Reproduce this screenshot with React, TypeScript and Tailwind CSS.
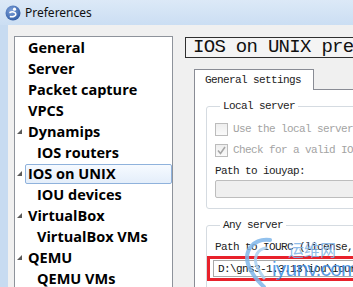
import React from 'react';

type Item = { label: string; level: 0 | 1; arrow?: boolean; selected?: boolean };

const items: Item[] = [
  { label: 'General', level: 0 },
  { label: 'Server', level: 0 },
  { label: 'Packet capture', level: 0 },
  { label: 'VPCS', level: 0 },
  { label: 'Dynamips', level: 0, arrow: true },
  { label: 'IOS routers', level: 1 },
  { label: 'IOS on UNIX', level: 0, arrow: true, selected: true },
  { label: 'IOU devices', level: 1 },
  { label: 'VirtualBox', level: 0, arrow: true },
  { label: 'VirtualBox VMs', level: 1 },
  { label: 'QEMU', level: 0, arrow: true },
  { label: 'QEMU VMs', level: 1 },
];

const mono = "font-['Liberation_Mono',monospace] text-[11px] tracking-[-0.6px] leading-[16px]";

function Checkbox({ checked }: { checked?: boolean }) {
  return (
    <span className="w-[13px] h-[13px] shrink-0 border border-[#bcbcbc] bg-gradient-to-b from-[#eeeeee] to-[#fafafa] flex items-center justify-center">
      {checked && (
        <svg width="9" height="9" viewBox="0 0 9 9">
          <polyline points="1,4.5 3.5,7.5 8,1" fill="none" stroke="#a6a6a6" strokeWidth="1.6" />
        </svg>
      )}
    </span>
  );
}

function TitleIcon() {
  return (
    <svg width="16" height="16" viewBox="0 0 16 16">
      <defs>
        <radialGradient id="g" cx="0.4" cy="0.35" r="0.7">
          <stop offset="0" stopColor="#7fa3dc" />
          <stop offset="1" stopColor="#2f5aa3" />
        </radialGradient>
      </defs>
      <circle cx="8" cy="8" r="7.5" fill="url(#g)" />
      <circle cx="9.5" cy="4.2" r="1.6" fill="#fff" />
      <path d="M5 7.5 C7 6.2 10.5 6.8 10.8 9 C11 11.2 8 12.2 5.5 11.6" fill="none" stroke="#fff" strokeWidth="1.6" strokeLinecap="round" />
    </svg>
  );
}

export default function App() {
  return (
    <div className="w-[353px] h-[287px] overflow-hidden relative flex flex-col bg-[#c7dbf1]">
      {/* title bar */}
      <div className="h-[25px] shrink-0 flex items-center pl-[5px] gap-[4px] bg-gradient-to-b from-[#dce9f7] to-[#cbdef3]">
        <TitleIcon />
        <span className="font-['Noto_Sans',sans-serif] text-[12px] text-[#111]">Preferences</span>
      </div>

      <div className="flex-1 flex pl-[8px] min-h-0">
        <div className="flex-1 flex bg-[#f0f0f0] pt-[11px] pl-[6px] gap-[12px] min-w-0">
          {/* tree */}
          <div className="w-[159px] h-[300px] shrink-0 bg-white border border-[#8e939b] font-['Open_Sans',sans-serif] font-bold text-[14.5px] text-black">
            {items.map((it) => (
              <div key={it.label} className="h-[21px] flex items-center pl-[2px]">
                <span className="w-[8px] shrink-0 flex items-center">
                  {it.arrow && (
                    <svg width="5" height="5" viewBox="0 0 5 5" className="-mt-[1px]">
                      <polygon points="5,0 5,5 0,5" fill="#5a5a5a" />
                    </svg>
                  )}
                </span>
                <span
                  className={
                    'flex-1 h-[20px] flex items-center pl-[2px] rounded-[2px] border whitespace-nowrap ' +
                    (it.level === 1 ? 'ml-[9px] ' : '') +
                    (it.selected
                      ? 'border-[#8fb2dc] bg-gradient-to-b from-[#f6faff] to-[#e4eefa]'
                      : 'border-transparent')
                  }
                >
                  {it.label}
                </span>
              </div>
            ))}
          </div>

          {/* right side */}
          <div className="flex-1 min-w-0 flex flex-col pt-[1px]">
            <div className="w-[220px] h-[21px] shrink-0 border border-[#2f2f2f] bg-[#f4f4f4] pl-[7px] flex items-center font-['Liberation_Mono',monospace] text-[19px] tracking-[-0.7px] text-[#111] whitespace-nowrap leading-none">
              IOS on UNIX preferences
            </div>

            <div className="mt-[11px] ml-[9px] flex flex-col">
              <div className={`relative z-10 w-[120px] h-[21px] border border-b-0 border-[#898c95] bg-white pl-[10px] pt-[2px] text-[#222] ${mono}`}>
                General settings
              </div>
              <div className="-mt-px w-[220px] h-[220px] border border-[#898c95] bg-white pl-[11px] pt-[8px] flex flex-col">
                <fieldset className="border border-[#d5dbe1] rounded-[3px] pl-[8px] pb-[10px] mr-[10px]">
                  <legend className={`ml-[5px] px-[3px] text-[#222] ${mono} leading-[14px]`}>Local server</legend>
                  <div className={`mt-[7px] h-[16px] flex items-center gap-[5px] text-[#a3a3a3] whitespace-nowrap ${mono}`}>
                    <Checkbox />
                    Use the local server
                  </div>
                  <div className={`mt-[5px] h-[16px] flex items-center gap-[5px] text-[#a3a3a3] whitespace-nowrap ${mono}`}>
                    <Checkbox checked />
                    Check for a valid IOU license key
                  </div>
                  <div className={`mt-[5px] h-[16px] flex items-center text-[#222] whitespace-nowrap ${mono}`}>
                    Path to iouyap:
                  </div>
                  <div className="mt-[1px] h-[18px] border border-[#bdbdbd] rounded-[2px] bg-[#efefef]" />
                </fieldset>

                <fieldset className="mt-[8px] border border-[#d5dbe1] rounded-[3px] pl-[8px] pb-[10px] mr-[10px]">
                  <legend className={`ml-[5px] px-[3px] text-[#222] ${mono} leading-[14px]`}>Any server</legend>
                  <div className={`mt-[6px] h-[16px] flex items-center text-[#222] whitespace-nowrap ${mono}`}>
                    Path to IOURC (license, optional):
                  </div>
                  <div className="mt-[1px] -ml-[8px] h-[25px] border-[3px] border-[#e8212b] pl-[3px] py-[1px]">
                    <div className={`h-[17px] border border-[#a9a9a9] bg-white pl-[4px] flex items-center text-[#111] whitespace-nowrap ${mono}`}>
                      D:\gns3-1.3.13\iou\iourc.txt
                    </div>
                  </div>
                </fieldset>
              </div>
            </div>
          </div>
        </div>
      </div>

      {/* watermark */}
      <div className="absolute left-[238px] top-[234px] w-[115px] h-[53px] pointer-events-none">
        <svg width="50" height="53" viewBox="0 0 50 53" className="absolute left-0 top-0">
          <path d="M32 6 C16 4 6 16 10 30 C13 40 20 47 26 53" fill="none" stroke="#7fb6ea" strokeOpacity="0.85" strokeWidth="4" strokeLinecap="round" />
          <path d="M28 14 C20 15 16 22 18 30 C20 36 23 40 26 44" fill="none" stroke="#a9d0f2" strokeOpacity="0.85" strokeWidth="3" strokeLinecap="round" />
        </svg>
        <div className="absolute left-[50px] top-[7px] font-['Noto_Sans_CJK_SC',sans-serif] text-[16px] leading-none text-[#7fb3e6]/90">
          运维网
        </div>
        <div className="absolute left-[34px] top-[24px] font-['Liberation_Sans',sans-serif] text-[21px] leading-none tracking-[-0.8px] text-[#3a8ae0]/85">
          iyunv.com
        </div>
      </div>
    </div>
  );
}
